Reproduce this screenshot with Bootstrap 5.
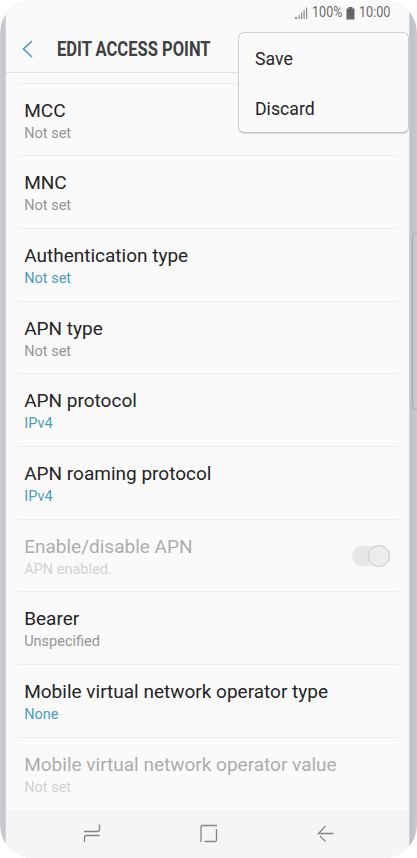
<!DOCTYPE html>
<html lang="en">

<head>
    <meta charset="UTF-8">
    <meta name="viewport" content="width=device-width, initial-scale=1">
    <title>Edit access point</title>
    <link href="https://cdn.jsdelivr.net/npm/bootstrap@5.3.0/dist/css/bootstrap.min.css" rel="stylesheet">
    <style>
        body {
            background: #fff;
            font-family: Roboto, "Liberation Sans", sans-serif;
            color: #252525;
        }

        .phone {
            width: 417px;
            height: 858px;
            padding: 0 8px 0 6px;
            border-radius: 33px;
            background: linear-gradient(90deg, #cfd0d5 0, #c3c4cb 3px, #d3d4d8 6px, #d3d4d8 409px, #bfc1c9 411px, #c9cbd1 417px);
        }

        .side-key {
            right: 0;
            top: 233px;
            width: 5px;
            height: 177px;
            border: 1px solid #a9abb3;
            border-right: 0;
            border-radius: 5px 0 0 5px;
        }

        .screen {
            background: #fafafa;
        }

        .status-bar {
            height: 26px;
            padding-right: 18px;
            font-size: 14.5px;
            line-height: 26px;
            color: #6a6a6a;
        }

        .narrow {
            display: inline-block;
            transform: scaleX(.87);
            transform-origin: 0 50%;
            white-space: nowrap;
        }

        .w-pct {
            width: 34px;
        }

        .w-time {
            width: 32px;
        }

        .app-bar {
            height: 47px;
            padding-left: 16px;
            border-bottom: 1px solid #e4e4e4;
        }

        .app-title {
            margin-left: 24px;
            font-size: 20px;
            font-weight: 700;
            line-height: 24px;
            color: #404040;
            transform: scaleX(.827);
        }

        .settings {
            height: 737px;
            padding: 9.5px 11px 0 12px;
        }

        .setting {
            height: 72.7px;
            padding: 14px 9px 0 6.2px;
            border-top: 1px solid #ebebeb;
        }

        .setting-name {
            font-size: 19px;
            line-height: 26px;
        }

        .setting-value {
            font-size: 14.5px;
            line-height: 20px;
            color: #959595;
        }

        .setting-value.picked {
            color: #4a9dbd;
        }

        .off .setting-name {
            color: #adadad;
        }

        .off .setting-value {
            color: #d2d2d2;
        }

        .toggle {
            width: 38px;
            height: 20px;
            margin: 12px -1px 0 0;
            border-radius: 10px;
            background: #e7e7e7;
        }

        .toggle-knob {
            width: 22px;
            height: 22px;
            margin: -1px 0 0 16px;
            border: 1px solid #cbcbcb;
            border-radius: 50%;
            background: #ececec;
        }

        .nav-keys {
            height: 48px;
            background: #f5f5f5;
        }

        .option-menu {
            left: 238px;
            top: 32px;
            width: 171px;
            height: 101px;
            padding-left: 16px;
            border: 1px solid #cfcfcf;
            border-bottom-color: #c2c2c2;
            border-radius: 6px;
            background: #fafafa;
            box-shadow: 0 1px 1px rgba(0, 0, 0, .12);
            font-size: 17.7px;
        }

        .option {
            height: 50px;
            line-height: 53px;
        }
    </style>
</head>

<body>
    <div class="phone position-relative overflow-hidden">
        <div class="screen h-100">
            <div class="status-bar d-flex justify-content-end align-items-center">
                <svg width="13" height="12" viewBox="0 0 13 12" fill="#8a8a8a" class="me-1">
                    <path d="M0 10h2v2H0zM3.500 8h1.200v4H3.500zM6 5.500h1.200V12H6zM8.500 3h1.200v9H8.500zM11 .5h1.200V12H11z" />
                </svg>
                <span class="narrow w-pct">100%</span>
                <svg width="9" height="13" viewBox="0 0 9 13" fill="#666" class="me-1">
                    <path d="M2.500 0h4v1.500H8.500V12.500H.5V1.500h2z" />
                </svg>
                <span class="narrow w-time">10:00</span>
            </div>

            <div class="app-bar d-flex align-items-center">
                <svg width="11" height="18" viewBox="0 0 11 18" fill="none" stroke="#4a9dbd" stroke-width="1.600">
                    <path d="M10 1 1.500 9 10 17" />
                </svg>
                <div class="app-title narrow">EDIT ACCESS POINT</div>
            </div>

            <div class="settings">
                <div class="setting">
                    <div class="setting-name">MCC</div>
                    <div class="setting-value">Not set</div>
                </div>
                <div class="setting">
                    <div class="setting-name">MNC</div>
                    <div class="setting-value">Not set</div>
                </div>
                <div class="setting">
                    <div class="setting-name">Authentication type</div>
                    <div class="setting-value picked">Not set</div>
                </div>
                <div class="setting">
                    <div class="setting-name">APN type</div>
                    <div class="setting-value">Not set</div>
                </div>
                <div class="setting">
                    <div class="setting-name">APN protocol</div>
                    <div class="setting-value picked">IPv4</div>
                </div>
                <div class="setting">
                    <div class="setting-name">APN roaming protocol</div>
                    <div class="setting-value picked">IPv4</div>
                </div>
                <div class="setting off d-flex justify-content-between">
                    <div>
                        <div class="setting-name">Enable/disable APN</div>
                        <div class="setting-value">APN enabled.</div>
                    </div>
                    <div class="toggle d-flex">
                        <div class="toggle-knob"></div>
                    </div>
                </div>
                <div class="setting">
                    <div class="setting-name">Bearer</div>
                    <div class="setting-value">Unspecified</div>
                </div>
                <div class="setting">
                    <div class="setting-name">Mobile virtual network operator type</div>
                    <div class="setting-value picked">None</div>
                </div>
                <div class="setting off">
                    <div class="setting-name">Mobile virtual network operator value</div>
                    <div class="setting-value">Not set</div>
                </div>
            </div>

            <div class="nav-keys">
                <svg class="d-block" width="403" height="48" viewBox="0 0 403 48" fill="none" stroke="#858585" stroke-width="1.300">
                    <path d="M78 21.500h13q2.500 0 2.500-2.500v-4.500M93.500 25.500h-13q-2 0-2 2V32" />
                    <path d="M211 15.500h-14.500q-1.500 0-1.500 1.500v15M198.500 31.500h10.500q1.500 0 1.500-1.500v-11" />
                    <path d="M327.500 23.500h-15l7-7.500M314 26l5.500 5.500" />
                </svg>
            </div>
        </div>

        <div class="side-key position-absolute"></div>

        <div class="option-menu position-absolute">
            <div class="option">Save</div>
            <div class="option">Discard</div>
        </div>
    </div>
    <script src="https://cdn.jsdelivr.net/npm/bootstrap@5.3.0/dist/js/bootstrap.bundle.min.js"></script>
</body>

</html>
